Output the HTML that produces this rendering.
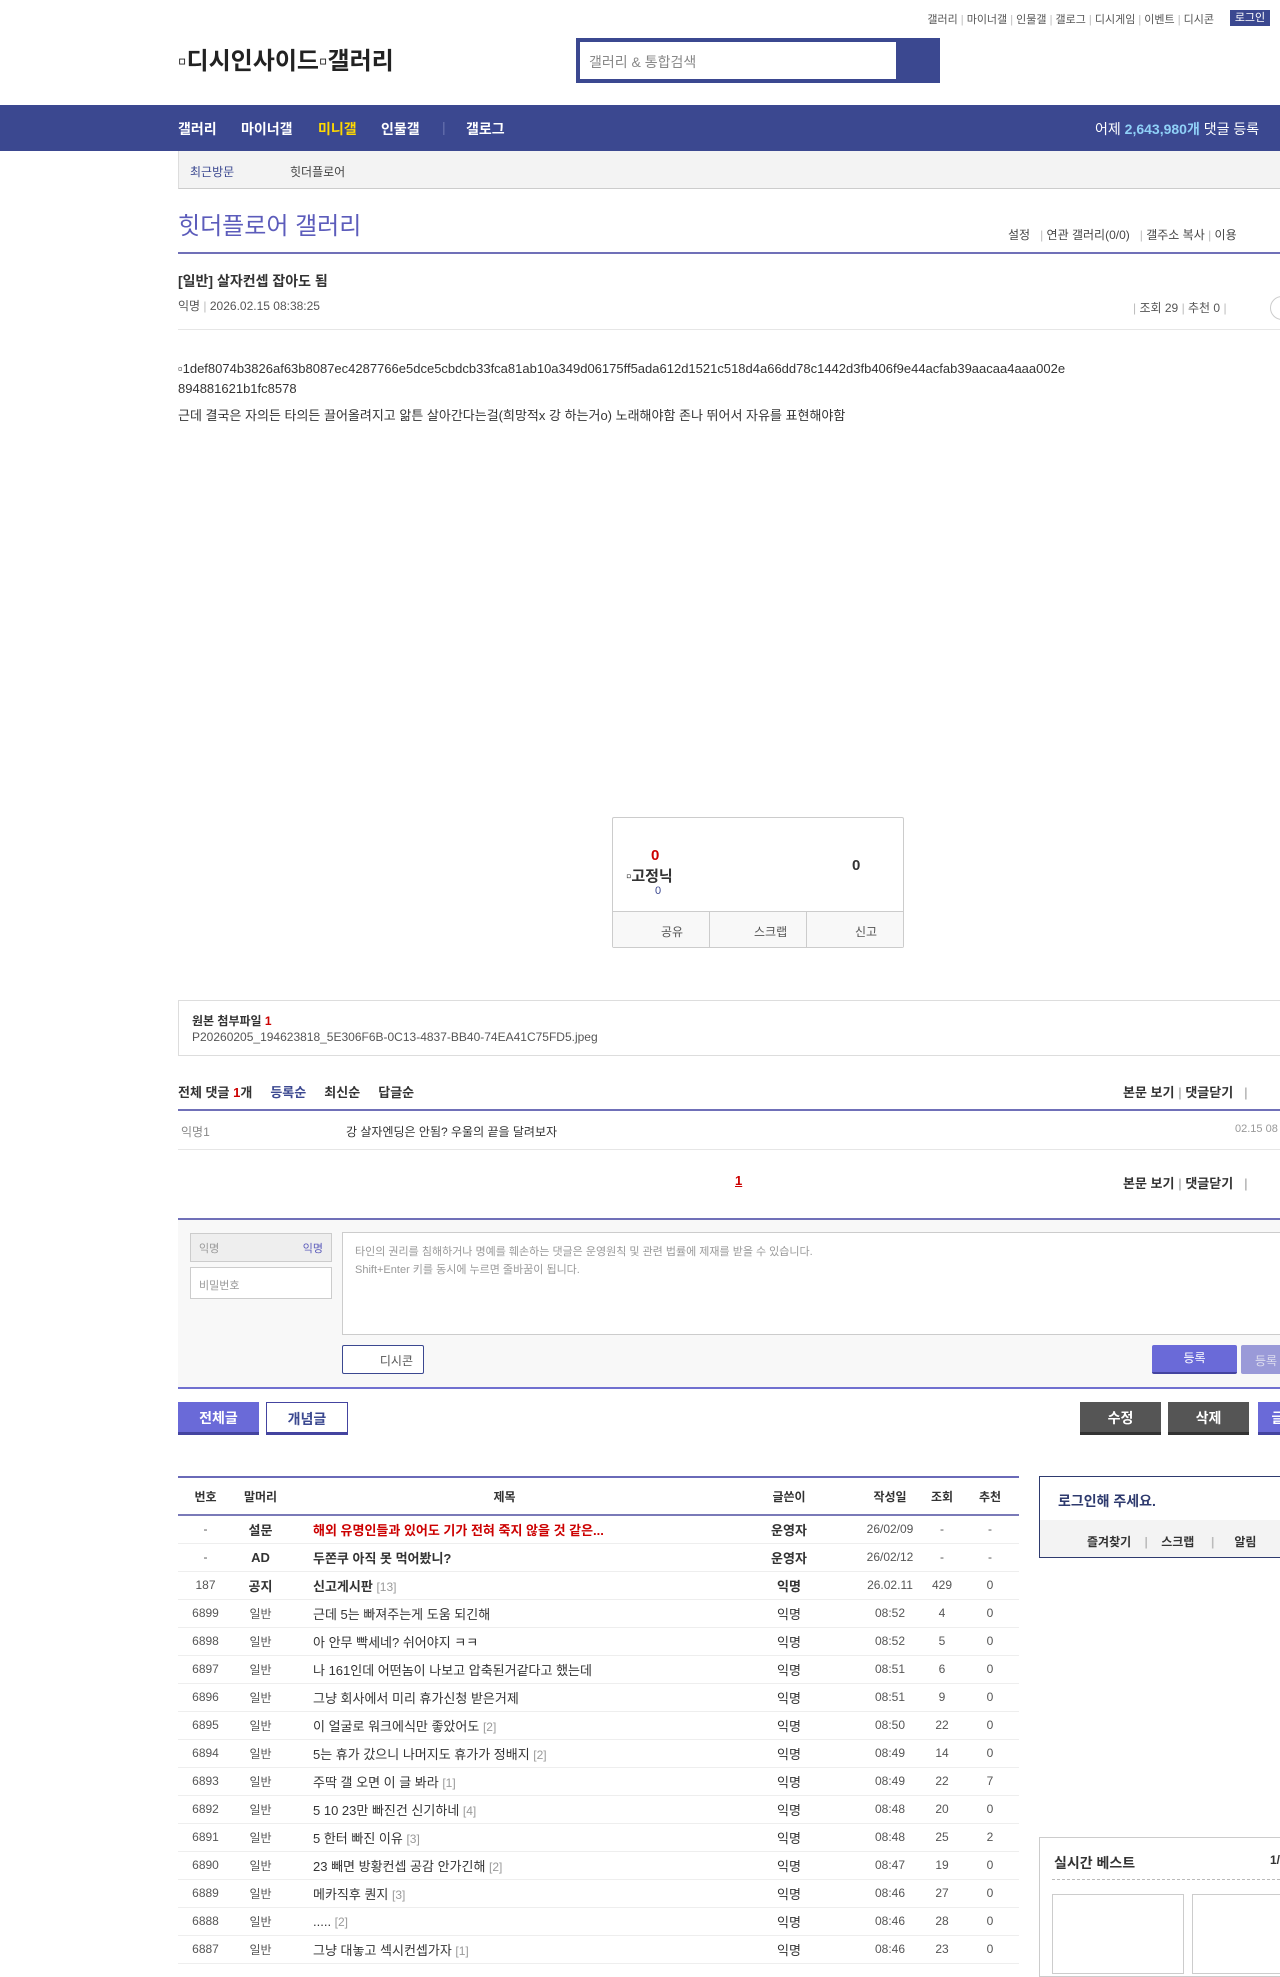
<!DOCTYPE html>
<html><head><meta charset="utf-8">
<style>
*{margin:0;padding:0;box-sizing:border-box}
body{width:1280px;height:1958px;overflow:hidden;background:#fff;font-family:"Liberation Sans","Noto Sans CJK KR",sans-serif;color:#333;font-size:13px;position:relative}
.a{position:absolute;white-space:nowrap}
.nav{position:absolute;left:0;top:105px;width:1280px;height:46px;background:#3b4890}
.nav span{position:absolute;top:14px;color:#fff;font-size:14px;font-weight:bold}
.sep{color:#bbb}
table{border-collapse:collapse;table-layout:fixed}
.lst{position:absolute;left:178px;top:1476px;width:841px;font-size:12px}
.lst th{height:38px;font-weight:bold;color:#333;font-size:12px;border-top:2px solid #6a6ab8;border-bottom:2px solid #7a7ab8}
.lst td{height:28px;border-bottom:1px solid #eee;text-align:center;color:#555;white-space:nowrap;overflow:hidden}
.lst td.t{text-align:left;padding-left:25px;color:#333;font-size:13px}
.lst td.w{font-size:13px;color:#333}
.c{color:#999;font-size:12px}
.btn{position:absolute;height:33px;line-height:33px;text-align:center;font-size:14px;font-weight:bold}
</style></head><body>
<div class="a" style="right:66px;top:11px;font-size:11px;color:#555">갤러리 <span class="sep">|</span> 마이너갤 <span class="sep">|</span> 인물갤 <span class="sep">|</span> 갤로그 <span class="sep">|</span> 디시게임 <span class="sep">|</span> 이벤트 <span class="sep">|</span> 디시콘</div>
<div class="a" style="left:1230px;top:10px;width:40px;height:16px;background:#3b4890;color:#fff;font-size:11px;text-align:center;line-height:16px">로그인</div>
<div class="a" style="left:178px;top:41px;font-size:24px;color:#222;font-weight:bold">▫디시인사이드▫갤러리</div>
<div class="a" style="left:576px;top:38px;width:364px;height:45px;background:#3b4890"></div>
<div class="a" style="left:580px;top:42px;width:316px;height:37px;background:#fff;color:#888;font-size:14px;padding:10px 9px">갤러리 &amp; 통합검색</div>
<div class="nav">
<span style="left:178px">갤러리</span><span style="left:241px">마이너갤</span><span style="left:318px;color:#ffd800">미니갤</span><span style="left:381px">인물갤</span><span style="left:442px;color:#6a74b0;font-weight:normal">|</span><span style="left:466px">갤로그</span>
<span style="left:1095px;font-weight:normal">어제 <b style="color:#8fd0f7">2,643,980개</b> 댓글 등록</span>
</div>
<div class="a" style="left:178px;top:151px;width:1102px;height:38px;background:#f3f3f3;border-left:1px solid #ddd;border-bottom:1px solid #ccc"></div>
<div class="a" style="left:190px;top:163px;font-size:12px;color:#3b4890">최근방문</div>
<div class="a" style="left:290px;top:163px;font-size:12px;color:#444">힛더플로어</div>
<div class="a" style="left:178px;top:206px;font-size:24px;color:#5c5cbb">힛더플로어 갤러리</div>
<div class="a" style="left:1008px;top:226px;font-size:12px;color:#444">설정 &nbsp;&nbsp;<span class="sep">|</span> 연관 갤러리(0/0) &nbsp;&nbsp;<span class="sep">|</span> 갤주소 복사 <span class="sep">|</span> 이용</div>
<div class="a" style="left:178px;top:252px;width:1102px;height:2px;background:#7070b8"></div>
<div class="a" style="left:178px;top:271px;font-size:14px;font-weight:bold;color:#333">[일반] 살자컨셉 잡아도 됨</div>
<div class="a" style="left:178px;top:297px;font-size:12px;color:#555">익명 <span class="sep">|</span> 2026.02.15 08:38:25</div>
<div class="a" style="left:1133px;top:299px;font-size:12px;color:#555"><span class="sep">|</span> 조회 29 <span class="sep">|</span> 추천 0 <span class="sep">|</span></div>
<div class="a" style="left:1270px;top:296px;width:24px;height:24px;border:1px solid #ccc;border-radius:50%"></div>
<div class="a" style="left:178px;top:329px;width:1102px;height:1px;background:#e6e6e6"></div>
<div class="a" style="left:178px;top:361px;font-size:13px;color:#333">▫1def8074b3826af63b8087ec4287766e5dce5cbdcb33fca81ab10a349d06175ff5ada612d1521c518d4a66dd78c1442d3fb406f9e44acfab39aacaa4aaa002e</div>
<div class="a" style="left:178px;top:381px;font-size:13px;color:#333">894881621b1fc8578</div>
<div class="a" style="left:178px;top:405px;font-size:13px;color:#333">근데 결국은 자의든 타의든 끌어올려지고 앎튼 살아간다는걸(희망적x 강 하는거o) 노래해야함 존나 뛰어서 자유를 표현해야함</div>
<div class="a" style="left:612px;top:817px;width:292px;height:131px;border:1px solid #ccc;border-radius:2px"></div>
<div class="a" style="left:651px;top:847px;font-size:15px;font-weight:bold;color:#c00">0</div>
<div class="a" style="left:626px;top:865px;font-size:15px;font-weight:bold;color:#333">▫고정닉</div>
<div class="a" style="left:655px;top:885px;font-size:11px;color:#3b4890">0</div>
<div class="a" style="left:852px;top:857px;font-size:15px;font-weight:bold;color:#333">0</div>
<div class="a" style="left:613px;top:911px;width:290px;height:36px;background:#f8f8f8;border-top:1px solid #ccc"></div>
<div class="a" style="left:709px;top:911px;width:1px;height:36px;background:#ccc"></div>
<div class="a" style="left:806px;top:911px;width:1px;height:36px;background:#ccc"></div>
<div class="a" style="left:661px;top:923px;font-size:12px;color:#555">공유</div>
<div class="a" style="left:754px;top:923px;font-size:12px;color:#555">스크랩</div>
<div class="a" style="left:855px;top:923px;font-size:12px;color:#555">신고</div>
<div class="a" style="left:178px;top:1000px;width:1120px;height:56px;border:1px solid #ddd"></div>
<div class="a" style="left:192px;top:1012px;font-size:12px;font-weight:bold;color:#333">원본 첨부파일 <span style="color:#c00">1</span></div>
<div class="a" style="left:192px;top:1030px;font-size:12px;color:#555">P20260205_194623818_5E306F6B-0C13-4837-BB40-74EA41C75FD5.jpeg</div>
<div class="a" style="left:178px;top:1082px;font-size:13px;font-weight:bold;color:#333">전체 댓글 <span style="color:#c00">1</span>개 &nbsp;&nbsp;&nbsp;&nbsp;<span style="color:#3b4890">등록순</span> &nbsp;&nbsp;&nbsp;&nbsp;최신순 &nbsp;&nbsp;&nbsp;&nbsp;답글순</div>
<div class="a" style="left:1123px;top:1082px;font-size:13px;font-weight:bold;color:#333">본문 보기 <span class="sep">|</span> 댓글닫기 &nbsp;&nbsp;<span class="sep">|</span></div>
<div class="a" style="left:178px;top:1109px;width:1102px;height:2px;background:#7070b8"></div>
<div class="a" style="left:181px;top:1123px;font-size:12px;color:#888">익명1</div>
<div class="a" style="left:346px;top:1123px;font-size:12px;color:#333">강 살자엔딩은 안됨? 우울의 끝을 달려보자</div>
<div class="a" style="left:1235px;top:1123px;font-size:11px;color:#999">02.15 08</div>
<div class="a" style="left:178px;top:1149px;width:1102px;height:1px;background:#e6e6e6"></div>
<div class="a" style="left:735px;top:1173px;font-size:13px;font-weight:bold;color:#c00;text-decoration:underline">1</div>
<div class="a" style="left:1123px;top:1173px;font-size:13px;font-weight:bold;color:#333">본문 보기 <span class="sep">|</span> 댓글닫기 &nbsp;&nbsp;<span class="sep">|</span></div>
<div class="a" style="left:178px;top:1218px;width:1102px;height:171px;background:#f8f8f8;border-top:2px solid #7070b8;border-bottom:2px solid #7070d0"></div>
<div class="a" style="left:190px;top:1233px;width:142px;height:29px;background:#eee;border:1px solid #ccc;font-size:11px;color:#999;padding:6px 8px">익명<span style="float:right;color:#5c5cbb">익명</span></div>
<div class="a" style="left:190px;top:1267px;width:142px;height:32px;background:#fff;border:1px solid #ccc;font-size:11px;color:#999;padding:9px 8px">비밀번호</div>
<div class="a" style="left:342px;top:1232px;width:950px;height:103px;background:#fff;border:1px solid #ccc;font-size:11px;color:#999;padding:10px 12px;line-height:18px">타인의 권리를 침해하거나 명예를 훼손하는 댓글은 운영원칙 및 관련 법률에 제재를 받을 수 있습니다.<br>Shift+Enter 키를 동시에 누르면 줄바꿈이 됩니다.</div>
<div class="a" style="left:342px;top:1345px;width:82px;height:29px;background:#fff;border:1px solid #3b4890;border-radius:2px;font-size:12px;color:#555;text-align:right;padding:6px 10px">디시콘</div>
<div class="a" style="left:1152px;top:1345px;width:85px;height:29px;background:#6a6ad8;border-bottom:2px solid #4444a0;border-radius:2px;color:#fff;font-size:12px;text-align:center;line-height:27px">등록</div>
<div class="a" style="left:1241px;top:1345px;width:60px;height:29px;background:#9a9ad8;border-radius:2px;color:#dde;font-size:12px;padding:7px 14px">등록</div>
<div class="btn" style="left:178px;top:1402px;width:81px;background:#6a6ad8;color:#fff;border-bottom:3px solid #4444a0">전체글</div>
<div class="btn" style="left:266px;top:1402px;width:82px;background:#fff;color:#3b4890;border:1px solid #4444a0;border-bottom:3px solid #4444a0">개념글</div>
<div class="btn" style="left:1080px;top:1402px;width:81px;background:#555;color:#fff;border-bottom:3px solid #333">수정</div>
<div class="btn" style="left:1168px;top:1402px;width:81px;background:#555;color:#fff;border-bottom:3px solid #333">삭제</div>
<div class="btn" style="left:1258px;top:1402px;width:40px;background:#6a6ad8;color:#fff;border-bottom:3px solid #4444a0">글</div>
<table class="lst">
<colgroup><col style="width:55px"><col style="width:55px"><col style="width:433px"><col style="width:136px"><col style="width:66px"><col style="width:38px"><col style="width:58px"></colgroup>
<tr><th>번호</th><th>말머리</th><th>제목</th><th>글쓴이</th><th>작성일</th><th>조회</th><th>추천</th></tr>
<tr><td>-</td><td class="w"><b>설문</b></td><td class="t"><b style="color:#c00">해외 유명인들과 있어도 기가 전혀 죽지 않을 것 같은...</b></td><td class="w"><b>운영자</b></td><td class="c">26/02/09</td><td>-</td><td>-</td></tr>
<tr><td>-</td><td class="w"><b>AD</b></td><td class="t"><b>두쫀쿠 아직 못 먹어봤니?</b></td><td class="w"><b>운영자</b></td><td class="c">26/02/12</td><td>-</td><td>-</td></tr>
<tr><td>187</td><td class="w"><b>공지</b></td><td class="t"><b>신고게시판</b> <span class="c">[13]</span></td><td class="w"><b>익명</b></td><td>26.02.11</td><td>429</td><td>0</td></tr>
<tr><td>6899</td><td>일반</td><td class="t">근데 5는 빠져주는게 도움 되긴해</td><td class="w">익명</td><td>08:52</td><td>4</td><td>0</td></tr>
<tr><td>6898</td><td>일반</td><td class="t">아 안무 빡세네? 쉬어야지 ㅋㅋ</td><td class="w">익명</td><td>08:52</td><td>5</td><td>0</td></tr>
<tr><td>6897</td><td>일반</td><td class="t">나 161인데 어떤놈이 나보고 압축된거같다고 했는데</td><td class="w">익명</td><td>08:51</td><td>6</td><td>0</td></tr>
<tr><td>6896</td><td>일반</td><td class="t">그냥 회사에서 미리 휴가신청 받은거제</td><td class="w">익명</td><td>08:51</td><td>9</td><td>0</td></tr>
<tr><td>6895</td><td>일반</td><td class="t">이 얼굴로 워크에식만 좋았어도 <span class="c">[2]</span></td><td class="w">익명</td><td>08:50</td><td>22</td><td>0</td></tr>
<tr><td>6894</td><td>일반</td><td class="t">5는 휴가 갔으니 나머지도 휴가가 정배지 <span class="c">[2]</span></td><td class="w">익명</td><td>08:49</td><td>14</td><td>0</td></tr>
<tr><td>6893</td><td>일반</td><td class="t">주딱 갤 오면 이 글 봐라 <span class="c">[1]</span></td><td class="w">익명</td><td>08:49</td><td>22</td><td>7</td></tr>
<tr><td>6892</td><td>일반</td><td class="t">5 10 23만 빠진건 신기하네 <span class="c">[4]</span></td><td class="w">익명</td><td>08:48</td><td>20</td><td>0</td></tr>
<tr><td>6891</td><td>일반</td><td class="t">5 한터 빠진 이유 <span class="c">[3]</span></td><td class="w">익명</td><td>08:48</td><td>25</td><td>2</td></tr>
<tr><td>6890</td><td>일반</td><td class="t">23 빼면 방황컨셉 공감 안가긴해 <span class="c">[2]</span></td><td class="w">익명</td><td>08:47</td><td>19</td><td>0</td></tr>
<tr><td>6889</td><td>일반</td><td class="t">메카직후 퀀지 <span class="c">[3]</span></td><td class="w">익명</td><td>08:46</td><td>27</td><td>0</td></tr>
<tr><td>6888</td><td>일반</td><td class="t">..... <span class="c">[2]</span></td><td class="w">익명</td><td>08:46</td><td>28</td><td>0</td></tr>
<tr><td>6887</td><td>일반</td><td class="t">그냥 대놓고 섹시컨셉가자 <span class="c">[1]</span></td><td class="w">익명</td><td>08:46</td><td>23</td><td>0</td></tr>
</table>
<div class="a" style="left:1039px;top:1476px;width:260px;height:82px;border:1px solid #2e3a6e;background:#fff"></div>
<div class="a" style="left:1058px;top:1491px;font-size:14px;font-weight:bold;color:#2e3a6e">로그인해 주세요.</div>
<div class="a" style="left:1040px;top:1520px;width:240px;height:37px;background:#f3f3f3"></div>
<div class="a" style="left:1087px;top:1533px;font-size:12px;font-weight:bold;color:#333">즐겨찾기 &nbsp;&nbsp;&nbsp;<span class="sep">|</span> &nbsp;&nbsp;&nbsp;스크랩 &nbsp;&nbsp;&nbsp;&nbsp;<span class="sep">|</span> &nbsp;&nbsp;&nbsp;&nbsp;&nbsp;알림</div>
<div class="a" style="left:1039px;top:1837px;width:260px;height:140px;border:1px solid #ccc"></div>
<div class="a" style="left:1054px;top:1853px;font-size:14px;font-weight:bold;color:#333">실시간 베스트</div>
<div class="a" style="left:1270px;top:1853px;font-size:12px;font-weight:bold;color:#333">1/</div>
<div class="a" style="left:1052px;top:1879px;width:228px;height:0;border-top:1px dashed #bbb"></div>
<div class="a" style="left:1052px;top:1894px;width:132px;height:80px;border:1px solid #ccc"></div>
<div class="a" style="left:1192px;top:1894px;width:100px;height:80px;border:1px solid #ccc"></div>
</body></html>
